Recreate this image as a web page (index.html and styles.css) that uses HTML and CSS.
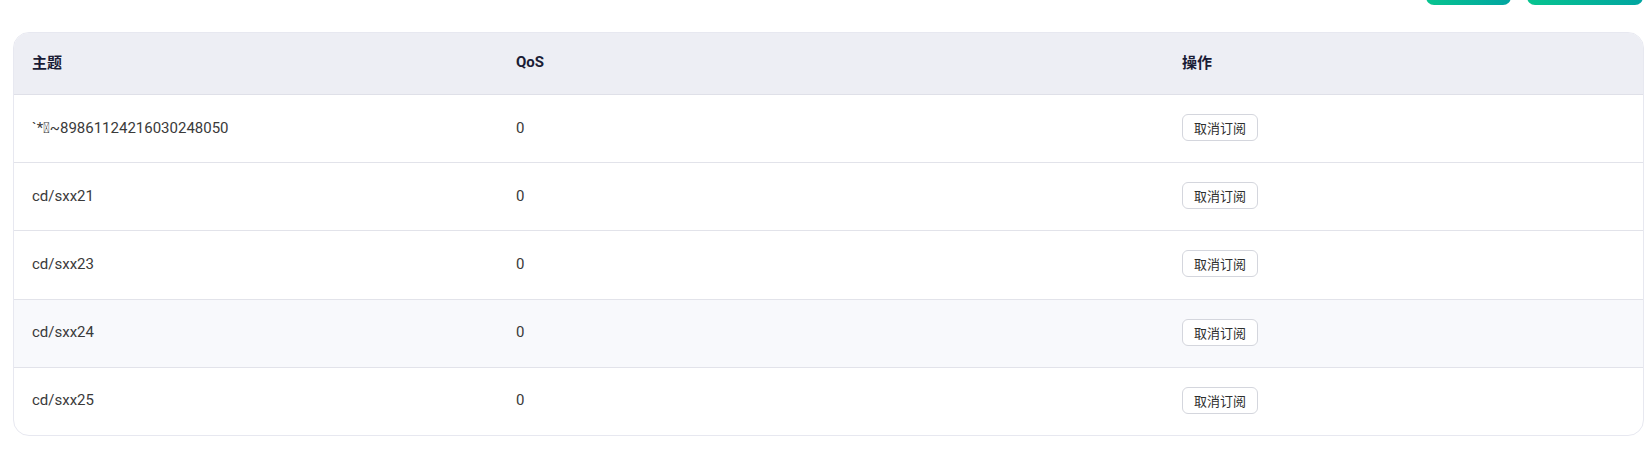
FILE: index.html
```html
<!DOCTYPE html>
<html lang="zh-CN">
<head>
<meta charset="utf-8">
<title>订阅</title>
<link rel="stylesheet" href="styles.css">
</head>
<body>
<div class="page">
  <div class="toolbar">
    <button class="btn-primary btn-a" aria-label="添加"></button>
    <button class="btn-primary btn-b" aria-label="添加订阅"></button>
  </div>
  <div class="card">
    <table class="tbl">
      <thead>
        <tr><th class="c1">主题</th><th class="c2">QoS</th><th class="c3">操作</th></tr>
      </thead>
      <tbody>
        <tr><td>`*&#xE000;~89861124216030248050</td><td>0</td><td><button class="btn-sm">取消订阅</button></td></tr>
        <tr><td>cd/sxx21</td><td>0</td><td><button class="btn-sm">取消订阅</button></td></tr>
        <tr><td>cd/sxx23</td><td>0</td><td><button class="btn-sm">取消订阅</button></td></tr>
        <tr class="hover"><td>cd/sxx24</td><td>0</td><td><button class="btn-sm">取消订阅</button></td></tr>
        <tr><td>cd/sxx25</td><td>0</td><td><button class="btn-sm">取消订阅</button></td></tr>
      </tbody>
    </table>
  </div>
</div>
</body>
</html>
```

FILE: styles.css
```css
html, body {
  margin: 0;
  padding: 0;
  background: #ffffff;
}
body {
  font-family: Roboto, "Noto Sans CJK SC", sans-serif;
  color: #333333;
}
.page {
  padding: 0 5px 0 13px;
}
.toolbar {
  display: flex;
  justify-content: flex-end;
  gap: 16px;
  margin-top: -28px;
  margin-bottom: 27px;
  padding-right: 1px;
}
.btn-primary {
  height: 33px;
  border: none;
  border-radius: 8px;
  background: linear-gradient(90deg, #07c48f 0%, #01a5a1 100%);
}
.btn-a { width: 85px; }
.btn-b { width: 116px; }
.card {
  border: 1px solid #e7e8f0;
  border-radius: 16px;
  overflow: hidden;
}
.tbl {
  width: 100%;
  border-collapse: collapse;
  table-layout: fixed;
}
.tbl th {
  height: 57px;
  background: #edeef4;
  text-align: left;
  font-weight: 700;
  font-size: 15px;
  color: #1a1c35;
  padding: 0 0 4px 18px;
  border-bottom: 1px solid #dfe0e8;
}
.c1 { width: 466px; }
.c2 { width: 648px; }
.tbl td {
  height: 65.2px;
  padding: 0 0 2px 18px;
  font-size: 15px;
  color: #3a3a3a;
  border-bottom: 1px solid #e2e3ea;
}
.tbl tbody tr:last-child td {
  border-bottom: none;
}
.tbl tr.hover td {
  background: #f8f9fc;
}
.btn-sm {
  height: 27px;
  width: 76px;
  padding: 0;
  border: 1px solid #d4d6dd;
  border-radius: 6px;
  background: #ffffff;
  color: #2e2e2e;
  font-family: "Noto Sans CJK SC", sans-serif;
  font-size: 13px;
  font-weight: 400;
  line-height: 25px;
  vertical-align: middle;
}
```
